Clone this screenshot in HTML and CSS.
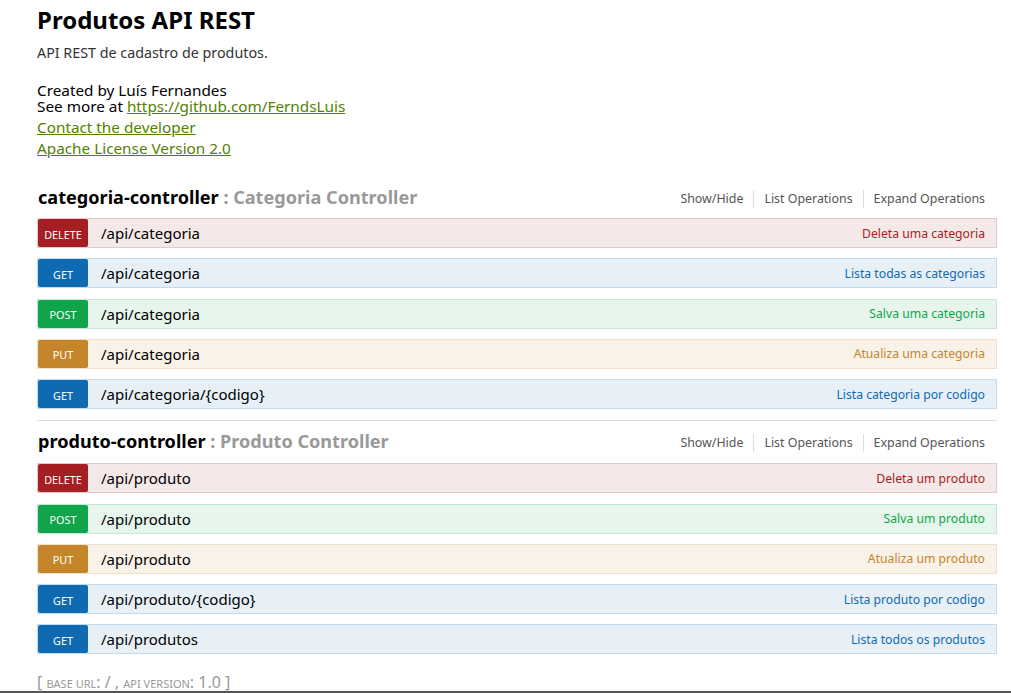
FILE: index.html
```html
<!DOCTYPE html>
<html lang="pt">
<head>
<meta charset="utf-8">
<title>Produtos API REST</title>
<link rel="stylesheet" href="styles.css">
</head>
<body>
<div class="wrap">
  <div class="info">
    <h1 class="info-title">Produtos API REST</h1>
    <p class="info-desc">API REST de cadastro de produtos.</p>
    <div class="info-contact">
      <div>Created by Luís Fernandes</div>
      <div>See more at <a href="#">https://github.com/FerndsLuis</a></div>
    </div>
    <div class="info-link"><a href="#">Contact the developer</a></div>
    <div class="info-link"><a href="#">Apache License Version 2.0</a></div>
  </div>

  <ul class="resources">
    <li class="resource">
      <div class="res-heading">
        <h2><a href="#">categoria-controller</a> : Categoria Controller</h2>
        <ul class="res-options">
          <li><a href="#">Show/Hide</a></li>
          <li><a href="#">List Operations</a></li>
          <li class="last"><a href="#">Expand Operations</a></li>
        </ul>
      </div>
      <ul class="ops">
        <li class="op delete"><span class="method">DELETE</span><span class="path">/api/categoria</span><span class="summary">Deleta uma categoria</span></li>
        <li class="op get"><span class="method">GET</span><span class="path">/api/categoria</span><span class="summary">Lista todas as categorias</span></li>
        <li class="op post"><span class="method">POST</span><span class="path">/api/categoria</span><span class="summary">Salva uma categoria</span></li>
        <li class="op put"><span class="method">PUT</span><span class="path">/api/categoria</span><span class="summary">Atualiza uma categoria</span></li>
        <li class="op get"><span class="method">GET</span><span class="path">/api/categoria/{codigo}</span><span class="summary">Lista categoria por codigo</span></li>
      </ul>
    </li>
    <li class="resource">
      <div class="res-heading">
        <h2><a href="#">produto-controller</a> : Produto Controller</h2>
        <ul class="res-options">
          <li><a href="#">Show/Hide</a></li>
          <li><a href="#">List Operations</a></li>
          <li class="last"><a href="#">Expand Operations</a></li>
        </ul>
      </div>
      <ul class="ops">
        <li class="op delete"><span class="method">DELETE</span><span class="path">/api/produto</span><span class="summary">Deleta um produto</span></li>
        <li class="op post"><span class="method">POST</span><span class="path">/api/produto</span><span class="summary">Salva um produto</span></li>
        <li class="op put"><span class="method">PUT</span><span class="path">/api/produto</span><span class="summary">Atualiza um produto</span></li>
        <li class="op get"><span class="method">GET</span><span class="path">/api/produto/{codigo}</span><span class="summary">Lista produto por codigo</span></li>
        <li class="op get"><span class="method">GET</span><span class="path">/api/produtos</span><span class="summary">Lista todos os produtos</span></li>
      </ul>
    </li>
  </ul>

  <div class="footer">[ <span class="sc">BASE URL</span>: / , <span class="sc">API VERSION</span>: 1.0 ]</div>
</div>
<div class="bottom-edge"></div>
</body>
</html>
```

FILE: styles.css
```css
* { box-sizing: border-box; }
body {
  margin: 0;
  font-family: "Noto Sans", "Open Sans", sans-serif;
  color: #000;
  background: #fff;
}
.wrap {
  margin-left: 37px;
  width: 960px;
}
.info-title {
  font-size: 24px;
  font-weight: bold;
  margin: 0;
  padding-top: 4px;
  line-height: 32px;
}
.info-desc {
  font-size: 14.3px;
  color: #333;
  margin: 8px 0 0;
  line-height: 18px;
}
.info-contact {
  margin-top: 20px;
  font-size: 15.3px;
  line-height: 16px;
  padding-bottom: 3px;
}
.info-link {
  font-size: 15.3px;
  line-height: 21px;
}
a { color: #547f00; }
.resources {
  list-style: none;
  margin: 22px 0 0;
  padding: 0;
}
.resource {
  border-bottom: 1px solid #ddd;
}
.resource:last-child { border-bottom: none; }
.res-heading {
  display: flex;
  justify-content: space-between;
  align-items: flex-start;
  height: 37px;
  padding: 4px 1px 0;
}
.resource + .resource .res-heading {
  height: 42px;
  padding-top: 8px;
}
.res-heading h2 {
  margin: 0;
  font-size: 18.1px;
  line-height: 24px;
  font-weight: bold;
  color: #999;
}
.res-heading h2 a {
  color: #000;
  text-decoration: none;
}
.res-options {
  list-style: none;
  display: flex;
  margin: 5px 0 0;
  padding: 0;
  font-size: 12.4px;
}
.res-options li {
  padding: 0 10px;
  border-right: 1px solid #ddd;
  line-height: 18px;
}
.res-options li.last { border-right: none; padding-right: 11px; }
.res-options a {
  color: #555;
  text-decoration: none;
}
.ops {
  list-style: none;
  margin: 0;
  padding: 0 0 1px;
}
.op {
  display: flex;
  align-items: stretch;
  height: 30px;
  margin-bottom: 10.25px;
  border: 1px solid;
}
.method {
  width: 50px;
  color: #fff;
  font-size: 10.8px;
  border-radius: 2px;
  display: flex;
  align-items: center;
  justify-content: center;
  padding-top: 2px;
}
.path {
  padding-left: 13px;
  font-size: 15px;
  display: flex;
  align-items: center;
  flex: 1;
}
.summary {
  font-size: 12.2px;
  display: flex;
  align-items: center;
  padding-right: 11px;
}
.op.delete { background: #f5e8e8; border-color: #e8c6c7; }
.op.delete .method { background: #a41e22; }
.op.delete .summary { color: #a41e22; }
.op.get { background: #e7f0f7; border-color: #c3d9ec; }
.op.get .method { background: #0f6ab4; }
.op.get .summary { color: #0f6ab4; }
.op.post { background: #e7f6ec; border-color: #c3e8d1; }
.op.post .method { background: #10a54a; }
.op.post .summary { color: #10a54a; }
.op.put { background: #f9f2e9; border-color: #f0e0ca; }
.op.put .method { background: #c5862b; }
.op.put .summary { color: #c5862b; }
.footer {
  margin-top: 6px;
  font-size: 16px;
  color: #999;
  line-height: 20px;
}
.sc { font-size: 11px; }
.bottom-edge {
  position: fixed;
  left: 0;
  right: 0;
  bottom: 0;
  height: 2px;
  background: #555;
}
```
